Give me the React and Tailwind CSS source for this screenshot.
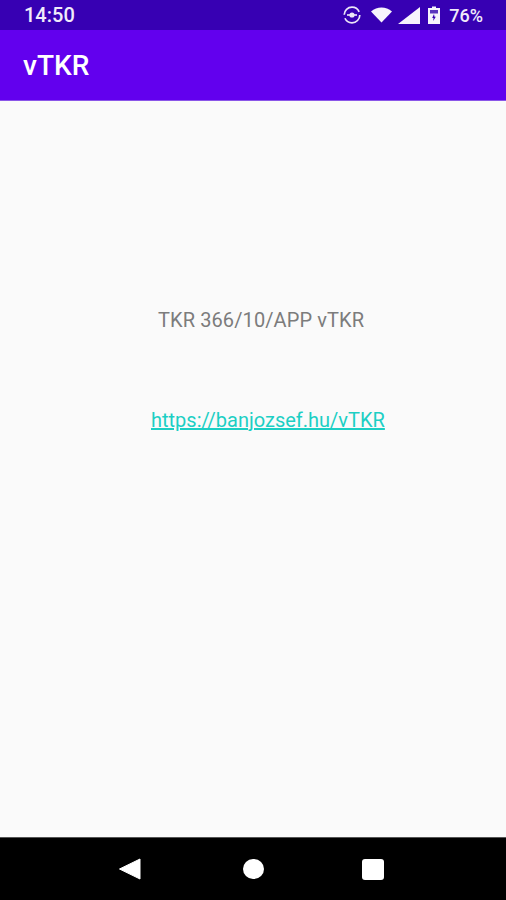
function StatusIcons() {
  return (
    <div className="flex items-center">
      {/* rotation lock */}
      <svg width="20" height="20" viewBox="0 0 20 20" className="mr-[9px]">
        <circle cx="10" cy="10" r="7.8" fill="none" stroke="#ece6f8" strokeWidth="1.7" strokeDasharray="21 3.5" />
        <circle cx="10" cy="10" r="2.6" fill="#ece6f8" />
        <rect x="5" y="9.2" width="10" height="1.6" fill="#ece6f8" />
      </svg>
      {/* wifi */}
      <svg width="21" height="16" viewBox="0 0 21 16" className="mr-[6px]">
        <path d="M0 4.5 C6 -0.8 15 -0.8 21 4.5 L10.5 15.5 Z" fill="#f6f3fc" />
      </svg>
      {/* signal */}
      <svg width="22" height="17" viewBox="0 0 22 17" className="mr-[8px]">
        <path d="M0 17 L22 0 L22 17 Z" fill="#f6f3fc" />
      </svg>
      {/* battery */}
      <svg width="12" height="18" viewBox="0 0 12 18" className="mr-[9px]">
        <path d="M4 0.5 H8 V2 H12 V18 H0 V2 H4 Z" fill="#f6f3fc" />
        <rect x="2" y="4" width="8" height="3.5" fill="#5a35bd" />
        <path d="M6 8 L4.2 12 H5.5 L5.2 15 L7.8 10.8 H6.5 Z" fill="#3700b3" />
      </svg>
      <span className="text-[18px] font-medium text-[#f0ebfa]">76%</span>
    </div>
  );
}

export default function App() {
  return (
    <div className="h-screen flex flex-col bg-[#fafafa] font-['Roboto',sans-serif]">

      {/* Status bar */}
      <div className="h-[30px] flex items-center justify-between pl-[24px] pr-[23px] bg-[#3700b3]">
        <span className="text-[20px] font-medium text-[#f0ebfa]">14:50</span>
        <StatusIcons />
      </div>

      {/* App bar */}
      <div className="h-[71px] flex items-center pl-[23px] pt-[1px] bg-[#6200ee] border-b border-[#8a55e8]">
        <h1 className="text-[28px] font-medium text-white">vTKR</h1>
      </div>

      {/* Content */}
      <div className="flex-1 flex flex-col items-start">
        <p className="mt-[207px] ml-[158px] text-[20px] leading-[24px] tracking-[0.1px] text-[#7c7c7c]">
          TKR 366/10/APP vTKR
        </p>
        <a href="#" className="mt-[76px] ml-[151px] text-[20px] leading-[24px] text-[#1ccfc4] underline">
          https://banjozsef.hu/vTKR
        </a>
      </div>

      {/* Nav bar */}
      <div className="h-[63px] flex items-center bg-black border-t border-[#555]">
        <svg width="22" height="22" viewBox="0 0 22 22" className="ml-[119px]">
          <path d="M0.5 11 L21 1 L21 21 Z" fill="white" stroke="white" strokeLinejoin="round" />
        </svg>
        <div className="ml-[102px] w-[21px] h-[20px] rounded-full bg-white" />
        <div className="ml-[98px] w-[22px] h-[21px] rounded-[3px] bg-white" />
      </div>

    </div>
  );
}
